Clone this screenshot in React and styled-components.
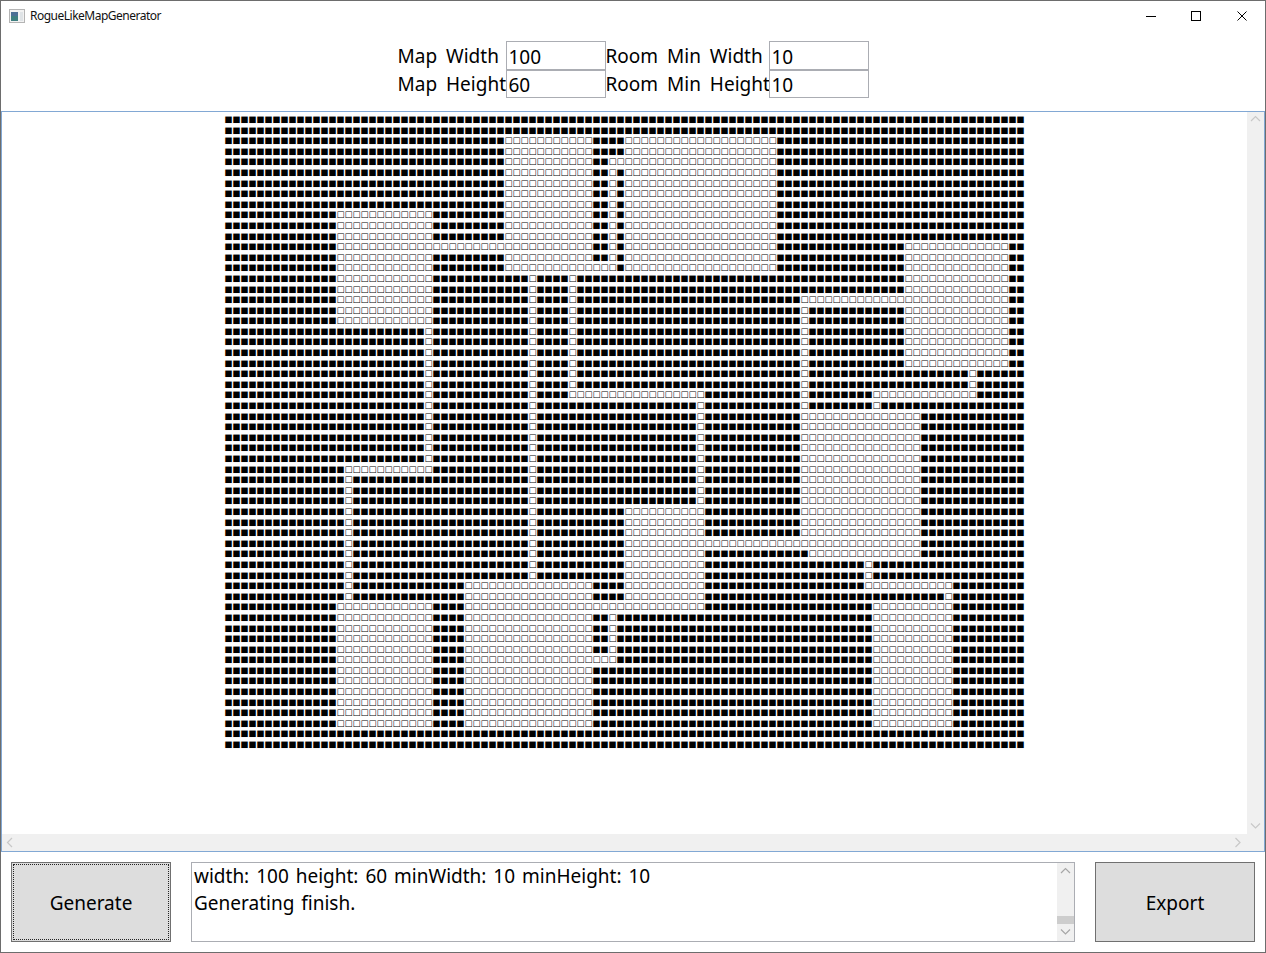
import React from 'react';
import styled, { createGlobalStyle } from 'styled-components';

const Global = createGlobalStyle`
  html, body { margin: 0; padding: 0; background: #fff; }
  * { box-sizing: border-box; }
`;

const UI = `"Noto Sans", "Noto Sans CJK KR", sans-serif`;

const Window = styled.div`
  width: 1266px;
  height: 953px;
  border: 1px solid #6d6d6d;
  display: flex;
  flex-direction: column;
  background: #fff;
  color: #000;
  font-family: ${UI};
  overflow: hidden;
`;
const TitleBar = styled.div`
  height: 30px;
  flex: none;
  display: flex;
  align-items: center;
  padding-left: 8px;
`;
const TitleText = styled.span`
  margin-left: 5px;
  margin-top: -2px;
  font-size: 12px;
  color: #111;
  flex: 1;
  letter-spacing: -0.5px;
`;
const WinButton = styled.button`
  width: 46px;
  height: 30px;
  border: 0;
  padding: 0 0 0 ${p => p.$nudge || 0}px;
  background: transparent;
  display: flex;
  align-items: center;
  justify-content: center;
`;
const Header = styled.div`
  height: 80px;
  flex: none;
  padding-top: 10px;
  display: grid;
  grid-template-columns: 108px 100px 163px 100px;
  grid-template-rows: 29px 28px;
  justify-content: center;
  align-content: start;
`;
const FieldLabel = styled.label`
  font-size: 19px;
  line-height: ${p => (p.$first ? '31px' : '29px')};
  white-space: nowrap;
  word-spacing: 4px;
`;
const Input = styled.div`
  border: 1px solid #abadb3;
  font-size: 19px;
  line-height: ${p => (p.$first ? '30px' : '29px')};
  padding-left: 2px;
  overflow: hidden;
`;
const ScrollArea = styled.div`
  height: 741px;
  flex: none;
  border: 1px solid #82a8d4;
  display: grid;
  grid-template-columns: 1fr 17px;
  grid-template-rows: 1fr 17px;
`;
const Viewport = styled.div`
  padding-top: 2px;
  display: flex;
  justify-content: center;
  align-items: flex-start;
  overflow: hidden;
`;
const MapGrid = styled.div`
  width: 800px;
  display: grid;
  grid-template-columns: repeat(100, 8px);
  grid-auto-rows: 10.6px;
  font-family: "DejaVu Sans", sans-serif;
  font-size: 8.46px;
  line-height: 10.6px;
  color: #000;
`;
const Cell = styled.span`
  display: flex;
  justify-content: center;
  white-space: nowrap;
`;
const BarV = styled.div`
  background: #f0f0f0;
  display: flex;
  flex-direction: column;
  justify-content: space-between;
  align-items: center;
  padding: 2px 0;
`;
const BarH = styled.div`
  background: #f0f0f0;
  display: flex;
  justify-content: space-between;
  align-items: center;
  padding: 0 3px;
`;
const Corner = styled.div`
  background: #f0f0f0;
`;
const Footer = styled.div`
  flex: 1;
  padding: 10px;
  display: grid;
  grid-template-columns: 160px 1fr 160px;
  gap: 20px;
`;
const ActionButton = styled.button`
  height: 80px;
  background: #dddddd;
  border: 1px solid #707070;
  font-family: ${UI};
  font-size: 19px;
  color: #000;
  padding: 2px 0 0;
  position: relative;
  ${p => p.$focused && `
    &::after {
      content: '';
      position: absolute;
      inset: 1px;
      border: 1px dotted #222;
    }
  `}
`;
const LogBox = styled.div`
  height: 80px;
  border: 1px solid #abadb3;
  display: flex;
`;
const LogText = styled.div`
  flex: 1;
  padding: 0 2px;
  font-size: 19px;
  line-height: 27px;
  word-spacing: 2px;
`;
const LogBar = styled.div`
  width: 17px;
  background: #f0f0f0;
  display: flex;
  flex-direction: column;
  align-items: center;
  justify-content: space-between;
  padding: 3px 0;
  position: relative;
`;
const LogThumb = styled.div`
  position: absolute;
  left: 0;
  right: 0;
  bottom: 17px;
  height: 8px;
  background: #cdcdcd;
`;

const Chevron = ({ dir, color = '#c8c8c8' }) => {
  const pts = {
    up: '1,7 5.5,2.5 10,7',
    down: '1,2.5 5.5,7 10,2.5',
    left: '7,1 2.5,5.5 7,10',
    right: '2.5,1 7,5.5 2.5,10',
  }[dir];
  return (
    <svg width="11" height="11" viewBox="0 0 11 11" fill="none">
      <polyline points={pts} stroke={color} strokeWidth="1.2" />
    </svg>
  );
};

const AppIcon = () => (
  <svg width="16" height="14" viewBox="0 0 16 14">
    <rect x="0.5" y="0.5" width="15" height="13" fill="#f2f2f2" stroke="#b4b4b4" />
    <rect x="2" y="3" width="7" height="9" fill="#3f7f80" />
    <rect x="2" y="3" width="7" height="4" fill="#4c6f95" />
    <rect x="11" y="3" width="3" height="9" fill="#dfe3e6" />
  </svg>
);

const H = 60, W = 100;
const floors = [
  [14, 25, 9, 19], [26, 34, 12, 12], [35, 45, 2, 14], [46, 48, 14, 14], [50, 68, 2, 14],
  [48, 49, 4, 4], [48, 48, 4, 14], [25, 25, 20, 32], [15, 25, 33, 33], [15, 15, 34, 45],
  [14, 25, 46, 57], [38, 38, 15, 43], [30, 45, 44, 57], [46, 49, 46, 46], [48, 48, 46, 51],
  [46, 48, 51, 51], [50, 59, 37, 46], [59, 59, 27, 36], [43, 43, 15, 26], [43, 59, 26, 26],
  [85, 97, 12, 23], [72, 97, 17, 17], [72, 72, 18, 27], [93, 93, 24, 25], [81, 93, 26, 26],
  [81, 81, 27, 27], [72, 86, 28, 40], [73, 86, 41, 41], [50, 72, 40, 40], [80, 80, 42, 43],
  [80, 90, 44, 44], [90, 90, 45, 45], [81, 90, 46, 57],
];
const isFloor = (c, r) => floors.some(([a, b, t, u]) => c >= a && c <= b && r >= t && r <= u);
const cells = Array.from({ length: H * W }, (_, i) => (isFloor(i % W, Math.floor(i / W)) ? '□' : '■'));

export default function App() {
  return (
    <>
      <Global />
      <Window>
        <TitleBar>
          <AppIcon />
          <TitleText>RogueLikeMapGenerator</TitleText>
          <WinButton aria-label="minimize" $nudge={2}>
            <svg width="10" height="10"><path d="M0 5.5H10" stroke="#000" /></svg>
          </WinButton>
          <WinButton aria-label="maximize">
            <svg width="10" height="10"><rect x="0.5" y="0.5" width="9" height="9" fill="none" stroke="#000" /></svg>
          </WinButton>
          <WinButton aria-label="close">
            <svg width="10" height="10"><path d="M0.5 0.5L9.5 9.5M9.5 0.5L0.5 9.5" stroke="#000" /></svg>
          </WinButton>
        </TitleBar>
        <Header>
          <FieldLabel $first>Map Width</FieldLabel>
          <Input $first>100</Input>
          <FieldLabel $first>Room Min Width</FieldLabel>
          <Input $first>10</Input>
          <FieldLabel>Map Height</FieldLabel>
          <Input>60</Input>
          <FieldLabel>Room Min Height</FieldLabel>
          <Input>10</Input>
        </Header>
        <ScrollArea>
          <Viewport>
            <MapGrid>
              {cells.map((g, i) => <Cell key={i}>{g}</Cell>)}
            </MapGrid>
          </Viewport>
          <BarV>
            <Chevron dir="up" />
            <Chevron dir="down" />
          </BarV>
          <BarH>
            <Chevron dir="left" />
            <Chevron dir="right" />
          </BarH>
          <Corner />
        </ScrollArea>
        <Footer>
          <ActionButton $focused>Generate</ActionButton>
          <LogBox>
            <LogText>
              width: 100 height: 60 minWidth: 10 minHeight: 10
              <br />
              Generating finish.
            </LogText>
            <LogBar>
              <Chevron dir="up" color="#a6a6a6" />
              <LogThumb />
              <Chevron dir="down" color="#a6a6a6" />
            </LogBar>
          </LogBox>
          <ActionButton>Export</ActionButton>
        </Footer>
      </Window>
    </>
  );
}
